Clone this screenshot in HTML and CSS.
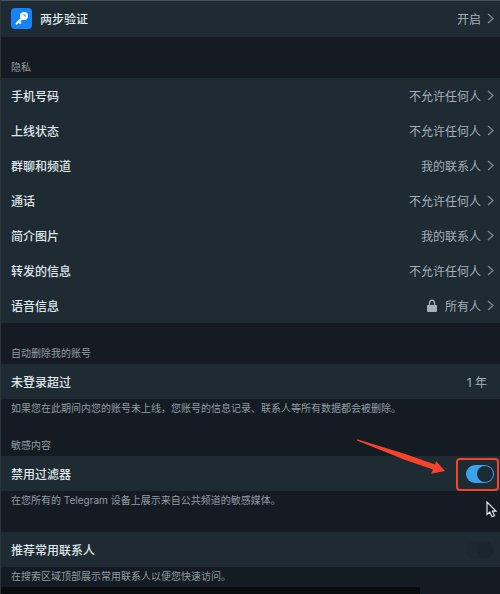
FILE: index.html
```html
<!DOCTYPE html>
<html lang="zh-CN">
<head>
    <meta charset="UTF-8">
    <meta name="viewport" content="width=device-width, initial-scale=1.0">
    <title>隐私与安全</title>
    <link rel="stylesheet" href="styles.css">
</head>
<body>
    <main class="settings">
        <section class="section section-top">
            <a href="#two-step" class="row">
                <svg class="key-icon" viewBox="0 0 21 21" aria-hidden="true">
                    <rect width="21" height="21" rx="4" fill="#1683fb"/>
                    <path d="M11.500 9.700 5.700 15.500M8 13.400l1.300 1.300" stroke="#fff" stroke-width="2.200" stroke-linecap="round"/>
                    <circle cx="13" cy="8" r="2.900" fill="none" stroke="#fff" stroke-width="2.400"/>
                    <circle cx="12" cy="9" r="2" fill="#fff"/>
                </svg>
                <span class="label">两步验证</span>
                <span class="value">开启</span>
                <svg class="chevron" viewBox="0 0 7 11" aria-hidden="true"><path d="M1 1l5 4.5L1 10"/></svg>
            </a>
        </section>

        <section class="section">
            <h2>隐私</h2>
            <div class="card">
                <a href="#phone" class="row">
                    <span class="label">手机号码</span>
                    <span class="value">不允许任何人</span>
                    <svg class="chevron" viewBox="0 0 7 11" aria-hidden="true"><path d="M1 1l5 4.5L1 10"/></svg>
                </a>
                <a href="#last-seen" class="row">
                    <span class="label">上线状态</span>
                    <span class="value">不允许任何人</span>
                    <svg class="chevron" viewBox="0 0 7 11" aria-hidden="true"><path d="M1 1l5 4.5L1 10"/></svg>
                </a>
                <a href="#groups" class="row">
                    <span class="label">群聊和频道</span>
                    <span class="value">我的联系人</span>
                    <svg class="chevron" viewBox="0 0 7 11" aria-hidden="true"><path d="M1 1l5 4.5L1 10"/></svg>
                </a>
                <a href="#calls" class="row">
                    <span class="label">通话</span>
                    <span class="value">不允许任何人</span>
                    <svg class="chevron" viewBox="0 0 7 11" aria-hidden="true"><path d="M1 1l5 4.5L1 10"/></svg>
                </a>
                <a href="#photo" class="row">
                    <span class="label">简介图片</span>
                    <span class="value">我的联系人</span>
                    <svg class="chevron" viewBox="0 0 7 11" aria-hidden="true"><path d="M1 1l5 4.5L1 10"/></svg>
                </a>
                <a href="#forwards" class="row">
                    <span class="label">转发的信息</span>
                    <span class="value">不允许任何人</span>
                    <svg class="chevron" viewBox="0 0 7 11" aria-hidden="true"><path d="M1 1l5 4.5L1 10"/></svg>
                </a>
                <a href="#voice" class="row">
                    <span class="label">语音信息</span>
                    <svg class="lock-icon" viewBox="0 0 10 14" aria-hidden="true">
                        <path d="M2.5 7V4a2.5 2.8 0 0 1 5 0v3" fill="none" stroke="#a3b1ba" stroke-width="1.4"/>
                        <rect y="6" width="10" height="7" rx="1" fill="#a3b1ba"/>
                    </svg>
                    <span class="value">所有人</span>
                    <svg class="chevron" viewBox="0 0 7 11" aria-hidden="true"><path d="M1 1l5 4.5L1 10"/></svg>
                </a>
            </div>
        </section>

        <section class="section">
            <h2>自动删除我的账号</h2>
            <div class="card">
                <a href="#auto-delete" class="row row-plain">
                    <span class="label">未登录超过</span>
                    <span class="value">1 年</span>
                </a>
            </div>
            <p>如果您在此期间内您的账号未上线，您账号的信息记录、联系人等所有数据都会被删除。</p>
        </section>

        <section class="section">
            <h2>敏感内容</h2>
            <div class="card">
                <div class="row">
                    <label class="label" for="filter">禁用过滤器</label>
                    <span class="highlight">
                        <input type="checkbox" id="filter" class="toggle" checked>
                        <svg class="arrow" viewBox="0 0 90 36" aria-hidden="true">
                            <path d="M1 1.4Q0 .5 2 .6L50 15.2 79 25.500 80 22 89 32 75 34.800 77 30.500 48 20.500Z" fill="#f8432b"/>
                        </svg>
                        <svg class="cursor" viewBox="0 0 11 17" aria-hidden="true">
                            <path d="M1 1v12.500l2.800-2.500 2.200 4.800 2.500-1.200-2.100-4.500H10Z" fill="#11161c" stroke="#dfe3e8" stroke-width="1.200"/>
                        </svg>
                    </span>
                </div>
            </div>
            <p>在您所有的 Telegram 设备上展示来自公共频道的敏感媒体。</p>
        </section>

        <section class="section section-untitled">
            <div class="card">
                <div class="row">
                    <label class="label" for="suggest">推荐常用联系人</label>
                    <input type="checkbox" id="suggest" class="toggle">
                </div>
            </div>
            <p>在搜索区域顶部展示常用联系人以便您快速访问。</p>
        </section>
        <div class="bottom-bar"></div>
    </main>
</body>
</html>
```
FILE: styles.css
```css
* {
    box-sizing: border-box;
}
body {
    margin: 0;
    font-family: Inter, "Noto Sans CJK SC", sans-serif;
    font-size: 12px;
    background-color: #151b22;
    color: #dfe6ea;
}
.settings {
    border-top: 1px solid #46555c;
    border-left: 1px solid #2b363c;
}
.section {
    margin-top: 22px;
}
.section-top {
    margin-top: 0;
    background-color: #1f2b32;
    padding-bottom: 1px;
}
.section-untitled {
    margin-top: 25px;
}
h2, p {
    margin: 0;
    padding: 0 10px;
    font-size: 10px;
    font-weight: normal;
    color: #919ba2;
}
h2 {
    line-height: 17px;
    margin-bottom: 2px;
}
p {
    line-height: 19px;
    margin-bottom: -3px;
}
.card {
    background-color: #1f2b32;
}
.row {
    display: flex;
    align-items: center;
    height: 35px;
    padding: 0 6px 0 10px;
    color: inherit;
    text-decoration: none;
}
.row-plain {
    padding-right: 13px;
}
.label {
    flex: 1;
    font-weight: 500;
}
.value {
    color: #a3b0b9;
}
.chevron {
    width: 7px;
    height: 11px;
    margin-left: 6px;
    fill: none;
    stroke: #77858e;
    stroke-width: 1.5;
}
.key-icon {
    width: 21px;
    height: 21px;
    margin-right: 8px;
}
.lock-icon {
    width: 10px;
    height: 14px;
    margin-right: 8px;
}

/* switches */
.toggle {
    appearance: none;
    display: block;
    position: relative;
    width: 28px;
    height: 18px;
    margin: 0;
    border-radius: 9px;
    background-color: #1d282f;
}
.toggle::before {
    content: "";
    position: absolute;
    top: 1px;
    right: 1px;
    width: 16px;
    height: 16px;
    border-radius: 50%;
    background-color: #1a252d;
}
.toggle:checked {
    background-color: #3ba3ea;
}
.toggle:checked::before {
    background-color: #1c2a34;
}

/* red frame, arrow and pointer over the filter switch */
.highlight {
    position: relative;
}
.highlight::after {
    content: "";
    position: absolute;
    top: -7px;
    left: -10px;
    right: -5px;
    bottom: -8px;
    border: 2px solid #f8432b;
    border-radius: 4px;
}
.arrow {
    position: absolute;
    top: -26px;
    right: 48px;
    width: 90px;
    height: 36px;
}
.cursor {
    position: absolute;
    top: 36px;
    right: -3px;
    width: 11px;
    height: 17px;
}
.bottom-bar {
    width: 84%;
    height: 7px;
    margin-top: 4px;
    background-color: #090c0f;
}
```
